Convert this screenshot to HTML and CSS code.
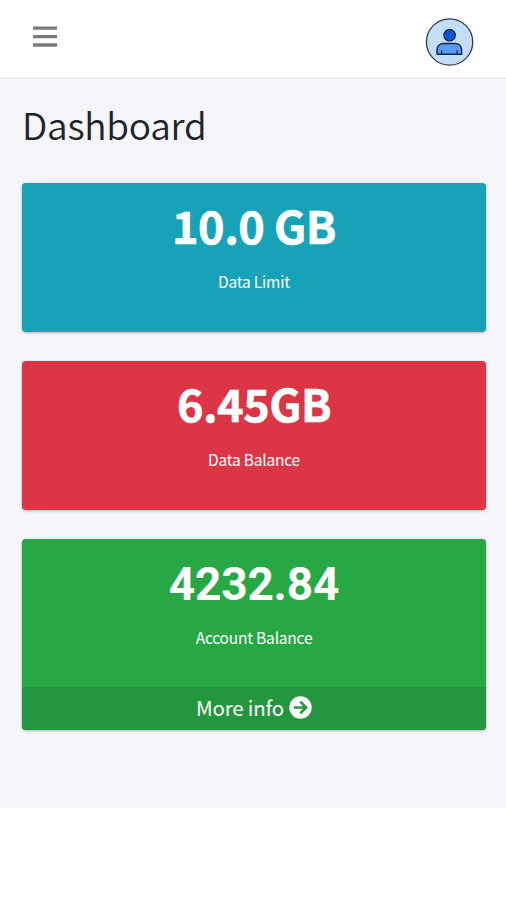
FILE: index.html
```html
<!DOCTYPE html>
<html lang="en">
<head>
<meta charset="utf-8">
<title>Dashboard</title>
<link rel="stylesheet" href="styles.css">
</head>
<body>
<header class="navbar">
  <button class="menu" aria-label="Menu"><svg width="24" height="22" viewBox="0 0 24 22"><path d="M0 2.1h24M0 10.6h24M0 19h24" stroke="#7b7b7b" stroke-width="3.4"/></svg></button>
  <a class="avatar" href="#" aria-label="Profile">
    <svg width="50" height="50" viewBox="0 0 50 50">
      <circle cx="25.6" cy="25" r="23.2" fill="#c5def8" stroke="#34404e" stroke-width="1.3"/>
      <circle cx="25.6" cy="18.2" r="5.7" fill="#0d55e0" stroke="#10264f" stroke-width="1.3"/>
      <path d="M13 37.2v-4.2c0-4 3-6.4 6.6-6.4h11.4c3.8 0 6.6 2.4 6.6 6.4v4.2z" fill="#5b9cf2" stroke="#10264f" stroke-width="1.5" stroke-linejoin="round"/>
      <path d="M17.6 33.2v4M33 33.2v4" stroke="#10264f" stroke-width="1.2"/>
    </svg>
  </a>
</header>
<main class="content">
  <h1 class="title">Dashboard</h1>
  <section class="card info">
    <h3 class="value">10.0 GB</h3>
    <p class="label">Data Limit</p>
  </section>
  <section class="card danger">
    <h3 class="value">6.45GB</h3>
    <p class="label">Data Balance</p>
  </section>
  <section class="card success">
    <h3 class="value amount">4232.84</h3>
    <p class="label">Account Balance</p>
    <a class="more" href="#"><span>More info</span>
      <svg width="23" height="23" viewBox="0 0 23 23"><circle cx="11.5" cy="11.5" r="11.2" fill="#fff"/><path d="M5 11.5h12M11.3 5.6l5.9 5.9-5.9 5.9" fill="none" stroke="#24963c" stroke-width="2.5"/></svg>
    </a>
  </section>
</main>
</body>
</html>
```
FILE: styles.css
```css
* { box-sizing: border-box; }
body {
  margin: 0;
  background: #fff;
  color: #212529;
  font-family: "Noto Sans CJK SC", "Noto Sans", sans-serif;
}
.navbar {
  display: flex;
  justify-content: space-between;
  align-items: flex-start;
  height: 79px;
  padding: 17px 32px 0 33px;
  border-bottom: 2px solid #ebedef;
}
.menu {
  margin: 9px 0 0;
  padding: 0;
  border: 0;
  background: none;
  line-height: 0;
}
.avatar { display: block; height: 50px; }
.avatar svg, .more svg { display: block; }
.content {
  height: 729px;
  padding: 21px 20px 0 22px;
  background: #f4f6f9;
}
.title {
  margin: 0 0 35px;
  font-size: 37px;
  line-height: 48px;
  font-weight: 350;
  letter-spacing: -0.25px;
}
.card {
  height: 149px;
  margin-bottom: 29px;
  padding-top: 16px;
  border-radius: 4px;
  box-shadow: 0 0 1px rgba(0, 0, 0, .2), 0 1px 3px rgba(0, 0, 0, .25);
  color: #fff;
  text-align: center;
  overflow: hidden;
}
.info { background: #17a2b8; }
.danger { background: #dc3545; }
.success { height: 191px; background: #28a745; }
.value {
  margin: 0 0 26px;
  font-size: 45px;
  line-height: 52px;
  font-weight: 700;
  letter-spacing: -0.5px;
  -webkit-text-stroke: 0.6px #fff;
}
.amount {
  padding-top: 3px;
  margin-bottom: 23px;
  font-family: Roboto, sans-serif;
  font-size: 46px;
  letter-spacing: -0.2px;
  -webkit-text-stroke: 0;
}
.label {
  margin: 0;
  font-size: 15.5px;
  line-height: 8px;
  letter-spacing: -0.2px;
}
.more {
  display: flex;
  justify-content: center;
  align-items: center;
  gap: 5px;
  height: 43px;
  margin-top: 46px;
  padding-bottom: 2px;
  background: #24963e;
  color: #fff;
  font-size: 20.5px;
  line-height: 41px;
  letter-spacing: -0.2px;
  text-decoration: none;
}
```
